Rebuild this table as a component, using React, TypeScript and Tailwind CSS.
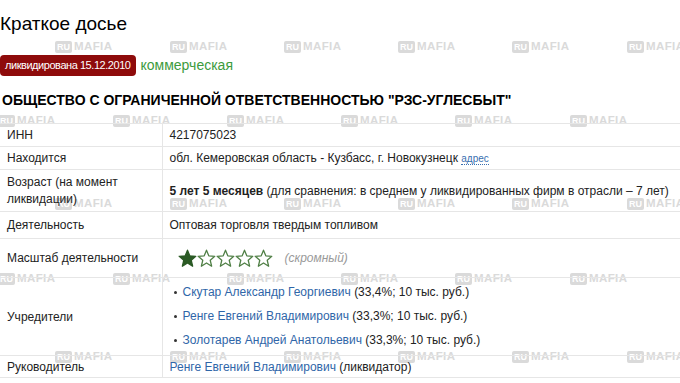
import React from "react";

const rowA = [55, 170, 284, 398, 512, 627];
const rowB = [-2, 113, 227, 341, 455, 570];
const marks: { x: number; y: number }[] = [];
[41, 115, 198, 273, 351].forEach((y, i) => {
  (i % 2 === 0 ? rowA : rowB).forEach((x) => marks.push({ x, y }));
});

function Watermark({ x, y }: { x: number; y: number }) {
  return (
    <div
      className="absolute flex items-center gap-[2px] pointer-events-none select-none"
      style={{ left: x, top: y }}
    >
      <span className="flex h-[12px] items-center rounded-[2px] bg-[#dadada] px-[2px] text-[9px] font-bold leading-none text-white">
        RU
      </span>
      <span className="text-[11.5px] font-bold leading-none tracking-[0.4px] text-[#dadada]">
        MAFIA
      </span>
    </div>
  );
}

function Star({ filled }: { filled?: boolean }) {
  return (
    <svg width="19" height="19" viewBox="0 0 24 24" className="block">
      <polygon
        points="12,1.5 14.9,8.6 22.5,9.2 16.7,14.2 18.5,21.8 12,17.7 5.5,21.8 7.3,14.2 1.5,9.2 9.1,8.6"
        fill={filled ? "#2b5a25" : "#ffffff"}
        stroke={filled ? "#2b5a25" : "#4f7f45"}
        strokeWidth="1.6"
        strokeLinejoin="round"
      />
    </svg>
  );
}

const founders = [
  { name: "Скутар Александр Георгиевич", share: "(33,4%; 10 тыс. руб.)" },
  { name: "Ренге Евгений Владимирович", share: "(33,3%; 10 тыс. руб.)" },
  { name: "Золотарев Андрей Анатольевич", share: "(33,3%; 10 тыс. руб.)" },
];

export default function App() {
  const label = "border-b border-[#e6e6e6] px-[7px] align-middle";
  const value = "border-b border-l border-[#e6e6e6] px-[7px] align-middle";
  return (
    <div className="relative h-[383px] w-[680px] overflow-hidden bg-white font-['Liberation_Sans',Arial,sans-serif] text-[12px] text-[#222]">
      {marks.map((m, i) => (
        <Watermark key={i} x={m.x} y={m.y} />
      ))}
      <div className="relative">
        <h1 className="pt-[12px] text-[19px] leading-[24px] text-black">Краткое досье</h1>
        <div className="mt-[19px] flex items-center gap-[5px]">
          <span className="rounded-[4px] bg-[#8e0b0b] px-[5px] text-[11px] leading-[21px] tracking-[-0.45px] text-white">
            ликвидирована 15.12.2010
          </span>
          <span className="text-[14px] text-[#3d9b3d]">коммерческая</span>
        </div>
        <h2 className="mt-[15px] pl-[2px] text-[14px] font-bold leading-[18px] text-black">
          ОБЩЕСТВО С ОГРАНИЧЕННОЙ ОТВЕТСТВЕННОСТЬЮ "РЗС-УГЛЕСБЫТ"
        </h2>
        <table className="mt-[14px] w-full table-fixed border-collapse border-t border-[#e6e6e6]">
          <colgroup>
            <col className="w-[162px]" />
            <col />
          </colgroup>
          <tbody>
            <tr className="h-[23px]">
              <td className={label}>ИНН</td>
              <td className={value}>4217075023</td>
            </tr>
            <tr className="h-[23px]">
              <td className={label}>Находится</td>
              <td className={value}>
                обл. Кемеровская область - Кузбасс, г. Новокузнецк{" "}
                <span className="border-b border-dotted border-[#3a6fb0] text-[10px] text-[#3a6fb0]">адрес</span>
              </td>
            </tr>
            <tr className="h-[42px]">
              <td className={`${label} leading-[17px]`}>Возраст (на момент ликвидации)</td>
              <td className={`${value} whitespace-nowrap`}>
                <b>5 лет 5 месяцев</b> (для сравнения: в среднем у ликвидированных фирм в отрасли – 7 лет)
              </td>
            </tr>
            <tr className="h-[27px]">
              <td className={label}>Деятельность</td>
              <td className={value}>Оптовая торговля твердым топливом</td>
            </tr>
            <tr className="h-[39px]">
              <td className={label}>Масштаб деятельности</td>
              <td className={value}>
                <div className="flex items-center pl-[8px]">
                  <Star filled />
                  <Star />
                  <Star />
                  <Star />
                  <Star />
                  <span className="ml-[12px] italic text-[#999]">(скромный)</span>
                </div>
              </td>
            </tr>
            <tr className="h-[78px]">
              <td className={label}>Учредители</td>
              <td className={value}>
                <ul className="flex flex-col gap-[7px] pl-[4px]">
                  {founders.map((f) => (
                    <li key={f.name} className="flex items-center leading-[17px]">
                      <span className="mr-[6px] inline-block h-[3px] w-[3px] rounded-full bg-[#333]" />
                      <span className="text-[#2f66a8]">{f.name}</span>&nbsp;{f.share}
                    </li>
                  ))}
                </ul>
              </td>
            </tr>
            <tr className="h-[22px]">
              <td className={label}>Руководитель</td>
              <td className={value}>
                <span className="text-[#2f66a8]">Ренге Евгений Владимирович</span> (ликвидатор)
              </td>
            </tr>
          </tbody>
        </table>
      </div>
    </div>
  );
}
